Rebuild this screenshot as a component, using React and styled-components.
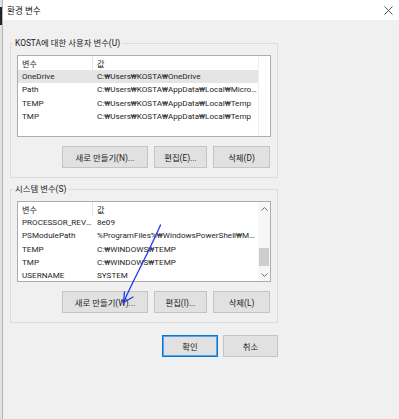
import React from 'react'
import styled, { createGlobalStyle } from 'styled-components'

const userVars = [
  ['OneDrive', 'C:₩Users₩KOSTA₩OneDrive'],
  ['Path', 'C:₩Users₩KOSTA₩AppData₩Local₩Microsoft₩WindowsApps;'],
  ['TEMP', 'C:₩Users₩KOSTA₩AppData₩Local₩Temp'],
  ['TMP', 'C:₩Users₩KOSTA₩AppData₩Local₩Temp'],
]

const systemVars = [
  ['PROCESSOR_REVISION', '8e09'],
  ['PSModulePath', '%ProgramFiles%₩WindowsPowerShell₩Modules;'],
  ['TEMP', 'C:₩WINDOWS₩TEMP'],
  ['TMP', 'C:₩WINDOWS₩TEMP'],
  ['USERNAME', 'SYSTEM'],
]

export default function App() {
  return (
    <Page>
      <GlobalStyle />
      <Edge>
        <EdgeDark />
      </Edge>
      <Window>
        <TitleBar>
          <span>환경 변수</span>
          <svg width="9" height="9" viewBox="0 0 9 9">
            <path d="M0.5 0.5 L8.5 8.5 M8.5 0.5 L0.5 8.5" stroke="#444" strokeWidth="0.9" />
          </svg>
        </TitleBar>
        <Content>
          <Group>
            <Legend>KOSTA에 대한 사용자 변수(U)</Legend>
            <VarList $height={82}>
              <VarTable>
                <HeaderRow>
                  <HeadCell $divider>변수</HeadCell>
                  <HeadCell>값</HeadCell>
                </HeaderRow>
                {userVars.map(([k, v], i) => (
                  <Row key={k} $selected={i === 0}>
                    <Cell>{k}</Cell>
                    <Cell>{v}</Cell>
                  </Row>
                ))}
              </VarTable>
              <Side />
            </VarList>
            <Buttons>
              <Button $w={86}>새로 만들기(N)...</Button>
              <Button $w={53}>편집(E)...</Button>
              <Button $w={57}>삭제(D)</Button>
            </Buttons>
          </Group>

          <Group $gap>
            <Legend>시스템 변수(S)</Legend>
            <VarList $height={81}>
              <VarTable>
                <HeaderRow>
                  <HeadCell $divider>변수</HeadCell>
                  <HeadCell>값</HeadCell>
                </HeaderRow>
                {systemVars.map(([k, v]) => (
                  <Row key={k}>
                    <Cell>{k}</Cell>
                    <Cell>{v}</Cell>
                  </Row>
                ))}
              </VarTable>
              <Scrollbar>
                <Arrow>
                  <svg width="7" height="4" viewBox="0 0 7 4">
                    <path d="M0.5 3.5 L3.5 0.6 L6.5 3.5" fill="none" stroke="#606060" strokeWidth="0.9" />
                  </svg>
                </Arrow>
                <Track>
                  <Thumb $offset={33} $size={18} />
                </Track>
                <Arrow>
                  <svg width="7" height="4" viewBox="0 0 7 4">
                    <path d="M0.5 0.5 L3.5 3.4 L6.5 0.5" fill="none" stroke="#606060" strokeWidth="0.9" />
                  </svg>
                </Arrow>
              </Scrollbar>
            </VarList>
            <Buttons>
              <Button $w={86}>새로 만들기(W)...</Button>
              <Button $w={53}>편집(I)...</Button>
              <Button $w={57}>삭제(L)</Button>
            </Buttons>
          </Group>

          <Footer>
            <Button $w={56} $primary>확인</Button>
            <Button $w={55}>취소</Button>
          </Footer>
        </Content>
      </Window>

      <Scribble width="399" height="419" viewBox="0 0 399 419">
        <path
          d="M160.5 225 C 154 240 146 256 139 270 C 133 282 128 292 123.5 302.5"
          fill="none" stroke="#2236f2" strokeWidth="1.3" strokeLinecap="round"
        />
        <path
          d="M123.5 302.5 L133 297 M123.5 302.5 L124.5 292"
          fill="none" stroke="#2236f2" strokeWidth="1.3" strokeLinecap="round"
        />
      </Scribble>
    </Page>
  )
}

const GlobalStyle = createGlobalStyle`
  html, body {
    margin: 0;
    padding: 0;
    background: #f0f0f0;
  }
  body {
    font-family: Roboto, "DejaVu Sans", "Noto Sans CJK KR", sans-serif;
    font-size: 8.4px;
    color: #1e1e1e;
  }
`

const Page = styled.div`
  position: relative;
  display: flex;
  width: 399px;
  height: 419px;
  overflow: hidden;
  background: #f0f0f0;
`

const Edge = styled.div`
  width: 2px;
  background: #e2e2e2;
  border-right: 1px solid #b4b4b4;
`

const EdgeDark = styled.div`
  margin-top: 7px;
  height: 18px;
  background: #1c2530;
`

const Window = styled.div`
  flex: 1;
  display: flex;
  flex-direction: column;
`

const TitleBar = styled.div`
  height: 20px;
  background: #fff;
  display: flex;
  align-items: center;
  justify-content: space-between;
  padding: 0 6px 0 4px;
  font-size: 8.6px;
  color: #111;
`

const Content = styled.div`
  display: flex;
  flex-direction: column;
  padding: 17px 0 0 7px;
`

const Group = styled.fieldset`
  width: 268px;
  box-sizing: border-box;
  margin: ${p => (p.$gap ? '5px' : '0')} 0 0;
  padding: 6px 6px 9px;
  border: 1px solid #dcdcdc;
  min-width: 0;
`

const Legend = styled.legend`
  margin-left: -4px;
  padding: 0 2px;
  line-height: 12px;
  color: #222;
`

const VarList = styled.div`
  display: flex;
  height: ${p => p.$height}px;
  box-sizing: border-box;
  border: 1px solid #acacac;
  background: #fff;
  overflow: hidden;
  font-size: 8.1px;
`

const VarTable = styled.div`
  width: 240px;
  display: flex;
  flex-direction: column;
`

const HeaderRow = styled.div`
  display: grid;
  grid-template-columns: 75px 1fr;
  height: 14px;
  flex-shrink: 0;
`

const HeadCell = styled.div`
  display: flex;
  align-items: center;
  padding-left: 4px;
  border-right: ${p => (p.$divider ? '1px solid #e5e5e5' : 'none')};
`

const Row = styled.div`
  display: grid;
  grid-template-columns: 75px 1fr;
  height: 13.33px;
  flex-shrink: 0;
  background: ${p => (p.$selected ? '#e5e5e5' : 'transparent')};
`

const Cell = styled.div`
  padding: 0 1px 0 4px;
  min-width: 0;
  line-height: 13.33px;
  overflow: hidden;
  white-space: nowrap;
  text-overflow: ellipsis;
`

const Side = styled.div`
  flex: 1;
  border-left: 1px solid #f0f0f0;
`

const Scrollbar = styled.div`
  flex: 1;
  display: flex;
  flex-direction: column;
  background: #f7f7f7;
`

const Arrow = styled.div`
  height: 13px;
  display: flex;
  align-items: center;
  justify-content: center;
  flex-shrink: 0;
`

const Track = styled.div`
  flex: 1;
  display: flex;
  flex-direction: column;
  align-items: center;
`

const Thumb = styled.div`
  margin-top: ${p => p.$offset}px;
  width: 10px;
  height: ${p => p.$size}px;
  background: #cdcdcd;
`

const Buttons = styled.div`
  display: flex;
  justify-content: flex-end;
  gap: 6px;
  margin-top: 9px;
  padding-right: 1px;
`

const Button = styled.div`
  width: ${p => p.$w}px;
  height: 22px;
  box-sizing: border-box;
  display: flex;
  align-items: center;
  justify-content: center;
  background: #e1e1e1;
  border: 1px solid ${p => (p.$primary ? '#0078d7' : '#c4c4c4')};
  box-shadow: ${p => (p.$primary ? 'inset 0 0 0 1px #5aa3e6' : 'none')};
  color: #222;
  white-space: nowrap;
`

const Footer = styled.div`
  width: 268px;
  display: flex;
  justify-content: flex-end;
  gap: 5px;
  margin-top: 12px;
`

const Scribble = styled.svg`
  position: absolute;
  left: 0;
  top: 0;
  pointer-events: none;
`
